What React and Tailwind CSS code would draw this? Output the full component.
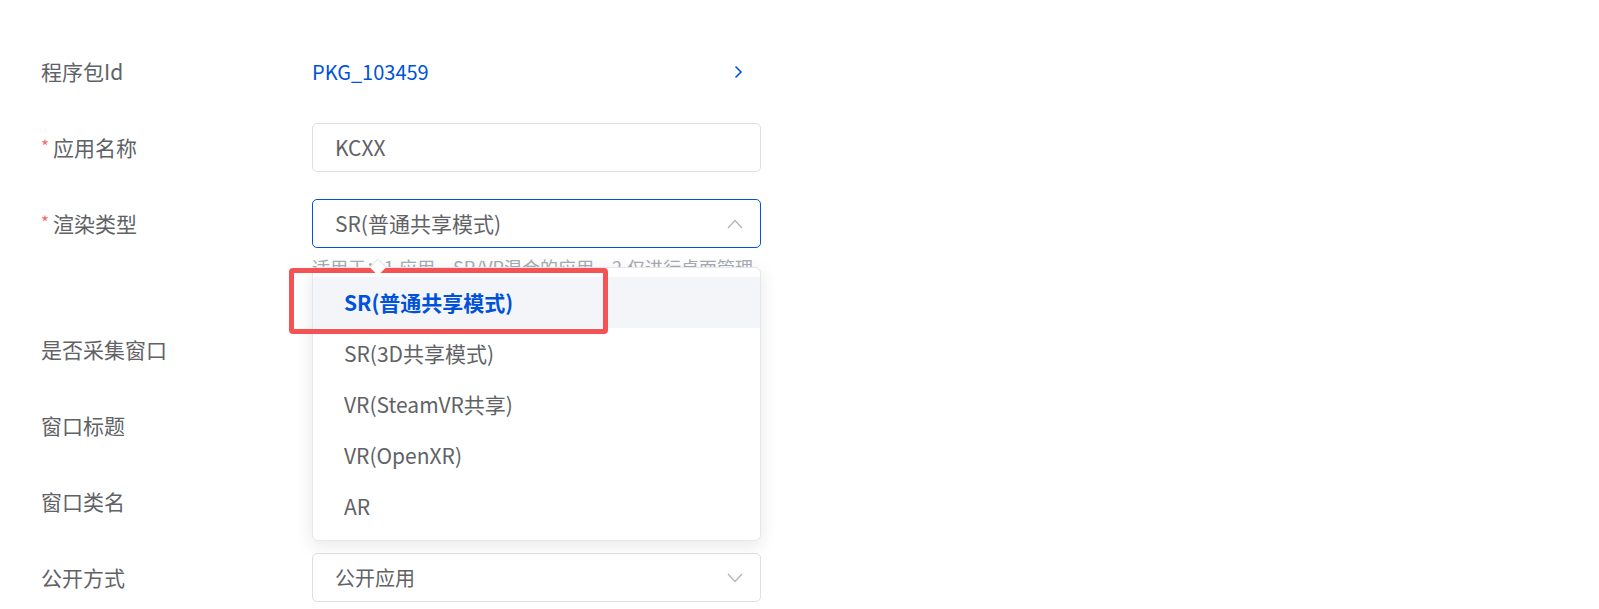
const options = [
  { label: "SR(普通共享模式)", active: true },
  { label: "SR(3D共享模式)" },
  { label: "VR(SteamVR共享)" },
  { label: "VR(OpenXR)" },
  { label: "AR" },
];

function Label({ required, children }) {
  return (
    <div className="flex h-[49px] w-[271px] shrink-0 items-center text-[21px] text-[#606266]">
      {required && <span className="mr-[4px] mt-[-4px] text-[17px] text-[#f56c6c]">*</span>}
      {children}
    </div>
  );
}

function Arrow({ up }) {
  return (
    <svg width="16" height="10" viewBox="0 0 16 10" className="shrink-0">
      <polyline
        points={up ? "1,9 8,1.5 15,9" : "1,1 8,8.5 15,1"}
        fill="none"
        stroke="#b4b7be"
        strokeWidth="1.4"
      />
    </svg>
  );
}

export default function App() {
  return (
    <div
      className="h-[609px] w-[1599px] overflow-hidden bg-white pl-[41px] pt-[47px]"
      style={{ fontFamily: '"Noto Sans CJK SC", "Noto Sans", sans-serif' }}
    >
      <div className="flex flex-col gap-[27px]">
        <div className="flex items-center">
          <Label>程序包Id</Label>
          <div className="flex h-[49px] w-[449px] items-center justify-between pr-[18px] text-[20px] text-[#0052d9]">
            <span>PKG_103459</span>
            <svg width="9" height="14" viewBox="0 0 9 14">
              <polyline points="1.5,1.5 7,7 1.5,12.5" fill="none" stroke="#0052d9" strokeWidth="1.6" />
            </svg>
          </div>
        </div>

        <div className="flex items-center">
          <Label required>应用名称</Label>
          <div className="flex h-[49px] w-[449px] items-center rounded-[5px] border border-[#dcdfe6] px-[22px] text-[21px] text-[#606266]">
            KCXX
          </div>
        </div>

        <div className="flex items-start">
          <Label required>渲染类型</Label>
          <div className="relative w-[449px]">
            <div className="flex h-[49px] items-center justify-between rounded-[5px] border border-[#0052d9] pl-[22px] pr-[17px] text-[21px] text-[#606266]">
              <span>SR(普通共享模式)</span>
              <Arrow up />
            </div>
            <div className="h-[50px] whitespace-nowrap pt-[6px] text-[18px] leading-[27px] text-[#a8abb2]">
              适用于：1.应用、SR/VR混合的应用，2.仅进行桌面管理
            </div>

            <div className="absolute left-[60px] top-[62px] z-20 h-[12px] w-[12px] rotate-45 border-l border-t border-[#e4e7ed] bg-white" />
            <div className="absolute left-0 top-[68px] z-10 w-[449px] rounded-[6px] border border-[#e4e7ed] bg-white pb-[8px] pt-[9px] shadow-[0_4px_16px_2px_rgba(0,0,0,0.08)]">
              {options.map((o) => (
                <div
                  key={o.label}
                  className={
                    o.active
                      ? "flex h-[51px] items-center bg-[#f4f5f9] pl-[31px] text-[21px] font-bold text-[#0052d9]"
                      : "flex h-[51px] items-center pl-[31px] text-[21px] text-[#606266]"
                  }
                >
                  {o.label}
                </div>
              ))}
              <div className="absolute left-[-24px] top-0 h-[66px] w-[319px] rounded-[4px] border-[5px] border-[#f55353]" />
            </div>
          </div>
        </div>

        <div className="flex items-center">
          <Label>是否采集窗口</Label>
        </div>

        <div className="flex items-center">
          <Label>窗口标题</Label>
        </div>

        <div className="flex items-center">
          <Label>窗口类名</Label>
        </div>

        <div className="flex items-center">
          <Label>公开方式</Label>
          <div className="flex h-[49px] w-[449px] items-center justify-between rounded-[5px] border border-[#dcdfe6] pl-[22px] pr-[17px] text-[20px] text-[#606266]">
            <span>公开应用</span>
            <Arrow />
          </div>
        </div>
      </div>
    </div>
  );
}
